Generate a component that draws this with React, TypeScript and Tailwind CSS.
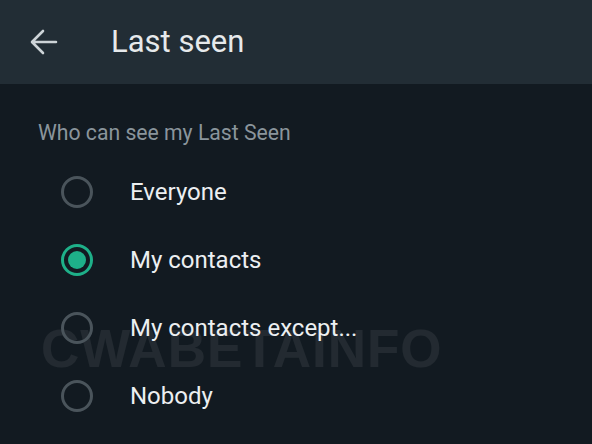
import React, { useState } from 'react'

const OPTIONS = ['Everyone', 'My contacts', 'My contacts except...', 'Nobody']

export default function App() {
  const [selected, setSelected] = useState('My contacts')

  return (
    <div
      className="relative w-[592px] h-[444px] overflow-hidden bg-[#121a21]"
      style={{ fontFamily: 'Roboto, "Noto Sans", sans-serif' }}
    >
      <header className="h-[84px] bg-[#222d35] flex items-center">
        <button className="ml-[30px] w-[28px] h-[28px] flex items-center justify-center text-[#cdd3d7]">
          <svg width="28" height="26" viewBox="0 0 28 26" fill="none" stroke="currentColor" strokeWidth={2.6} strokeLinecap="round" strokeLinejoin="round">
            <path d="M26 13H2.5M13 2L2 13l11 11" />
          </svg>
        </button>
        <h1 className="ml-[53px] text-[31px] text-[#e6e9eb] leading-none pb-[2px]">Last seen</h1>
      </header>

      <main className="pt-[38px]">
        <p className="pl-[38px] text-[21.2px] leading-none text-[#8a959c]">Who can see my Last Seen</p>
        <div className="mt-[15px] flex flex-col">
          {OPTIONS.map((opt) => {
            const on = opt === selected
            return (
              <button
                key={opt}
                onClick={() => setSelected(opt)}
                className="relative z-10 h-[68px] flex items-center text-left"
              >
                <span
                  className={
                    on
                      ? 'ml-[61px] w-[32px] h-[32px] rounded-full border-[3px] border-[#1eb089] flex items-center justify-center'
                      : 'ml-[61px] w-[32px] h-[32px] rounded-full border-[3px] border-[#4a545b]'
                  }
                >
                  {on && <span className="w-[18px] h-[18px] rounded-full bg-[#1eb089]" />}
                </span>
                <span className="ml-[37px] text-[24px] text-[#eceff1] leading-none">{opt}</span>
              </button>
            )
          })}
        </div>
      </main>

      <div
        className="absolute left-[41px] top-[322px] text-[53px] font-bold leading-none tracking-[1px] text-white/[0.07] select-none pointer-events-none"
        style={{ fontFamily: '"Liberation Sans", Arial, sans-serif' }}
      >
        CWABETAINFO
      </div>
    </div>
  )
}
